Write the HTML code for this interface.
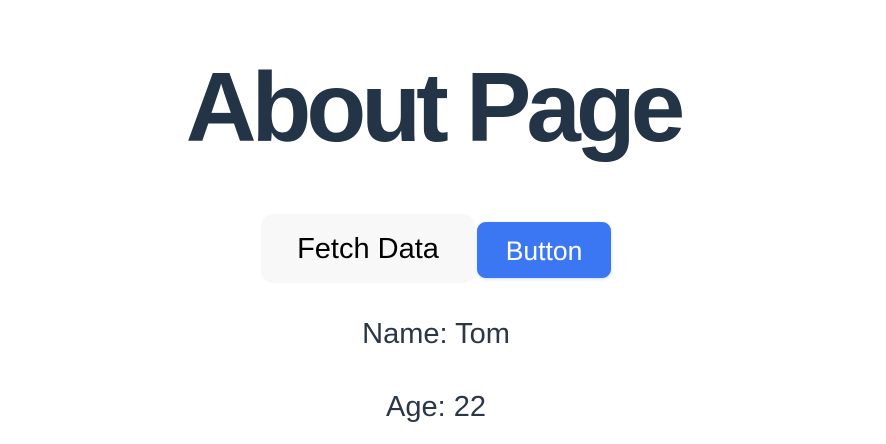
<!DOCTYPE html>
<html><head><style>
body{margin:0;width:886px;height:444px;background:#fff;font-family:"Liberation Sans",sans-serif;position:relative;overflow:hidden}
h1{position:absolute;left:-10px;width:886px;top:52px;margin:0;text-align:center;font-size:98px;font-weight:bold;color:#233446;letter-spacing:-5px;line-height:110px}
.f{position:absolute;left:261px;top:214px;width:214px;height:69px;background:#f8f8f8;border-radius:12px;font-size:29px;color:#000;text-align:center;line-height:71px}
.b{position:absolute;left:477px;top:222px;width:134px;height:56px;background:#3b77f2;border-radius:9px;font-size:26.5px;color:#fff;text-align:center;line-height:58px;box-shadow:0 1px 3px rgba(59,119,242,.25)}
p{position:absolute;left:-7px;width:886px;margin:0;text-align:center;font-size:29px;color:#2a3747}
</style></head><body>
<h1>About Page</h1>
<div class="f">Fetch Data</div>
<div class="b">Button</div>
<p style="top:318px">Name: Tom</p>
<p style="top:391px">Age: 22</p>
</body></html>
